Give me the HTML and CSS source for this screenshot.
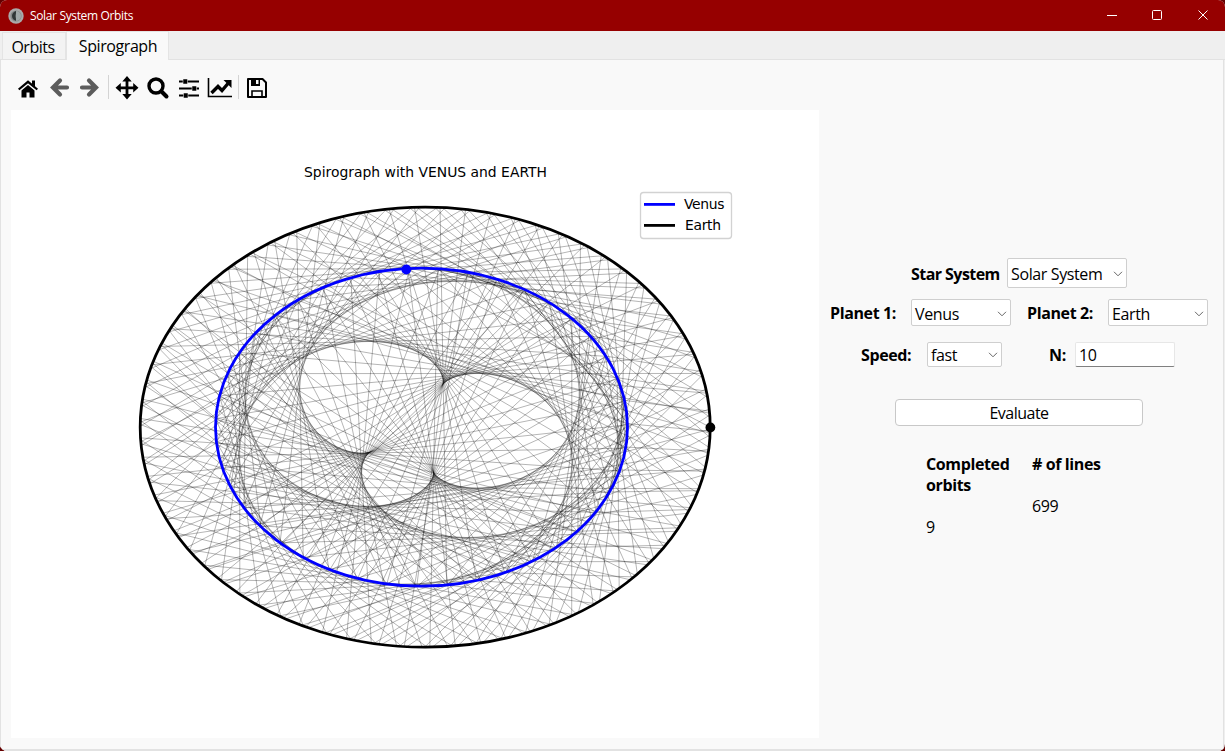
FILE: index.html
```html
<!DOCTYPE html>
<html lang="en">
<head>
<meta charset="utf-8">
<title>Solar System Orbits</title>
<link rel="stylesheet" href="styles.css">
</head>
<body>
<div class="window">
  <header class="titlebar">
    <svg class="app-icon" width="16" height="16" viewBox="0 0 16 16"><circle cx="8" cy="8" r="7.7" fill="#aaa9a9"/><circle cx="8" cy="8" r="5.6" fill="#858888"/><path d="M9 3a5 5 0 0 0 0 10c-2-3-2-7 0-10z" fill="#303636"/><path d="M8 3a5 5 0 0 1 0 10z" fill="#a0a8a8"/></svg>
    <span class="title">Solar System Orbits</span>
    <svg class="controls" width="120" height="31" viewBox="1104 0 120 31" fill="none" stroke="#fff"><path d="M1107 15.5h10"/><rect x="1152.5" y="10.500" width="9" height="9" rx="1"/><path d="M1198.500 10.500l9 9m0-9l-9 9"/></svg>
  </header>
  <nav class="tabs">
    <div class="tab"><span>Orbits</span></div>
    <div class="tab active"><span>Spirograph</span></div>
  </nav>
  <main class="page">
    <section class="left">
      <svg class="toolbar" width="270" height="40" viewBox="11 68 270 40">
        <path d="M18.700 89.500l9.300-7.700 9.300 7.700" fill="none" stroke="#000" stroke-width="2.200"/><path d="M32 80.500h3v6l-3-2zM21.500 90.500l6.500-5.500 6.500 5.500v7h-5v-5h-3v5h-5z"/>
        <path d="M67 87.500H53.500M60 80.500l-7 7 7 7" fill="none" stroke="#5c5c5c" stroke-width="4.200" stroke-linecap="round"/>
        <path d="M82 87.500h13.500M89 80.500l7 7-7 7" fill="none" stroke="#5c5c5c" stroke-width="4.200" stroke-linecap="round"/>
        <path d="M108.500 75v24M238.500 75v24" stroke="#d4d4d4"/>
        <path d="M127 79v18M118 87.800h18" stroke="#000" stroke-width="2.800"/><path d="M127 76l4.700 5.500h-9.400zM127 99.500l4.700-5.500h-9.400zM115.500 87.800l5.300-4.700v9.400zM138.500 87.800l-5.300-4.700v9.400z"/>
        <circle cx="156" cy="86" r="7" fill="none" stroke="#000" stroke-width="3.400"/><path d="M161.500 91.500l5 5" stroke="#000" stroke-width="4" stroke-linecap="round"/>
        <path d="M179 81.500h20M179 88.500h20M179 95.500h20" stroke="#000" stroke-width="2"/><path d="M183 79h4.500v5H183zM192 86h4.500v5H192zM183.500 93h4.500v5h-4.500z" stroke="#f9f9f9" stroke-width=".5"/>
        <path d="M208.500 78v18.500H232" fill="none" stroke="#000" stroke-width="1.600"/><path d="M211.500 93l6.500-6.500 4 4 6-7" fill="none" stroke="#000" stroke-width="3.400"/><path d="M223.500 80h8v8z"/>
        <path d="M248 79h14.500l3.500 3.500V97h-18z" fill="none" stroke="#000" stroke-width="2" stroke-linejoin="round"/><path d="M251 79h9v7h-9z"/><path d="M256 80h2.500v4H256z" fill="#f9f9f9"/><path d="M252 97v-6h10v6" fill="none" stroke="#000" stroke-width="1.600"/>
      </svg>
      <svg class="plot" width="808" height="628" viewBox="11 110 808 628">
        <g id="chords"></g>
        <ellipse class="venus" cx="421.500" cy="427.200" rx="206" ry="159"/>
        <ellipse class="earth" cx="425.200" cy="427.200" rx="285" ry="220"/>
        <circle cx="406.300" cy="269.500" r="4.900" fill="#00f"/>
        <circle cx="710.400" cy="427.500" r="4.900"/>
        <text x="304" y="177" textLength="243">Spirograph with VENUS and EARTH</text>
        <rect x="640.500" y="192.500" width="91" height="46" rx="3" fill="#fff" stroke="#d2d2d2" stroke-width="1.300"/>
        <path class="venus" d="M644 204.400h31"/><path class="earth" d="M644 225.400h31"/>
        <text x="684" y="209" textLength="40.500">Venus</text>
        <text x="685" y="230" textLength="36">Earth</text>
      </svg>
    </section>
    <section class="panel">
      <div class="row system"><b>Star System</b><div class="select"><span>Solar System</span><svg width="10" height="6" viewBox="0 0 10 6"><path d="M1 .8l4 4 4-4"/></svg></div></div>
      <div class="row planets"><b>Planet 1:</b><div class="select"><span>Venus</span><svg width="10" height="6" viewBox="0 0 10 6"><path d="M1 .8l4 4 4-4"/></svg></div><b class="second">Planet 2:</b><div class="select"><span>Earth</span><svg width="10" height="6" viewBox="0 0 10 6"><path d="M1 .8l4 4 4-4"/></svg></div></div>
      <div class="row speed"><b>Speed:</b><div class="select"><span>fast</span><svg width="10" height="6" viewBox="0 0 10 6"><path d="M1 .8l4 4 4-4"/></svg></div><b class="n">N:</b><div class="field">10</div></div>
      <div class="button">Evaluate</div>
      <div class="stats">
        <div class="stat"><b>Completed<br>orbits</b><span>9</span></div>
        <div class="stat"><b># of lines</b><span>699</span></div>
      </div>
    </section>
  </main>
</div>
<script src="plot.js"></script>
</body>
</html>
```
FILE: plot.js
```js
// Chords between the two planets, sampled at equal time steps (years).
const FOCUS = { x: 420.2, y: 427.2 };
const SCALE = { x: 285, y: 220 };
const STEP = 10 / 699;
const FIRST = 349;
const LAST = 699;
const position = (a, e, period, t) => {
  const angle = 2 * Math.PI * t / period;
  const r = a * (1 - e * e) / (1 - e * Math.cos(angle));
  return [FOCUS.x + SCALE.x * r * Math.cos(angle), FOCUS.y - SCALE.y * r * Math.sin(angle)];
};
const group = document.getElementById("chords");
for (let i = FIRST; i <= LAST; i++) {
  const [x1, y1] = position(0.723, 0.007, 0.615, i * STEP);
  const [x2, y2] = position(1, 0.017, 1, i * STEP);
  const line = document.createElementNS("http://www.w3.org/2000/svg", "line");
  line.setAttribute("x1", x1);
  line.setAttribute("y1", y1);
  line.setAttribute("x2", x2);
  line.setAttribute("y2", y2);
  group.appendChild(line);
}
```
FILE: styles.css
```css
* { box-sizing: border-box; }
body { margin: 0; width: 1225px; height: 751px; overflow: hidden; background: #650000; font: 16px/21px "Open Sans", "Noto Sans", sans-serif; color: #000; }
.window { display: flex; flex-direction: column; width: 1225px; height: 751px; border-radius: 7px; overflow: hidden; background: #efefef; }
.titlebar { display: flex; align-items: center; flex: 0 0 31px; padding-left: 8px; background: #960000; color: #fff; }
.title { margin-left: 6px; font-size: 12px; letter-spacing: -.35px; }
.controls { margin-left: auto; margin-right: 1px; }
.tabs { display: flex; align-items: flex-end; flex: 0 0 29px; padding-left: 2px; border-bottom: 1px solid #e2e2e2; }
.tab { display: flex; align-items: center; justify-content: center; width: 64px; height: 27px; padding: 2px 2px 0 0; border: 1px solid #e4e4e4; border-bottom: 0; background: #f3f3f3; letter-spacing: -.5px; }
.tab.active { width: 103px; height: 29px; margin-bottom: -1px; padding: 1px 0 0 1px; background: #f9f9f9; letter-spacing: -.42px; }
.page { display: flex; flex: 1; margin-right: 1px; border: solid #e2e2e2; border-width: 0 1px 2px 1px; background: #f9f9f9; }
.left { display: flex; flex-direction: column; padding: 8px 0 0 10px; }
.toolbar { margin-bottom: 2px; }
.plot { display: block; background: #fff; font: 13.9px "DejaVu Sans", sans-serif; }
#chords { stroke: #000; stroke-width: .7; stroke-opacity: .42; }
.venus, .earth { fill: none; stroke: #00f; stroke-width: 2.8; }
.earth { stroke: #000; }
.panel { flex: 1; padding: 198px 0 0 11px; letter-spacing: -.38px; }
.row { display: flex; align-items: center; white-space: nowrap; }
.system { height: 30px; padding-left: 81px; }
.system b { width: 96px; padding-top: 2px; letter-spacing: -.55px; }
.select { display: flex; align-items: center; justify-content: space-between; width: 100px; height: 27px; padding: 2px 3px 0 3px; border: 1px solid #cfcfcf; border-radius: 2px; background: #fff; }
.select svg { margin-top: -1px; fill: none; stroke: #666; }
.system .select { width: 120px; height: 30px; }
.planets { height: 27px; margin-top: 11px; }
.planets b { width: 81px; padding-top: 2px; }
.planets .select { padding-top: 3px; }
.planets .second { width: 81px; margin-left: 16px; }
.speed { height: 25px; margin-top: 16px; padding-left: 31px; }
.speed b { width: 66px; padding-top: 1px; }
.speed .select { width: 75px; height: 25px; }
.speed .n { width: 26px; margin-left: 47px; }
.field { width: 100px; height: 25px; padding: 2px 3px; border: 1px solid #e7e7e7; border-bottom-color: #808080; border-radius: 2px; background: #fff; }
.button { width: 248px; height: 27px; margin: 32px 0 0 65px; padding-top: 3px; border: 1px solid #c8c8c8; border-radius: 4px; background: #fff; text-align: center; letter-spacing: -.5px; }
.stats { display: flex; margin: 28px 0 0 96px; }
.stat { display: flex; flex-direction: column; gap: 21px; width: 106px; }
```
